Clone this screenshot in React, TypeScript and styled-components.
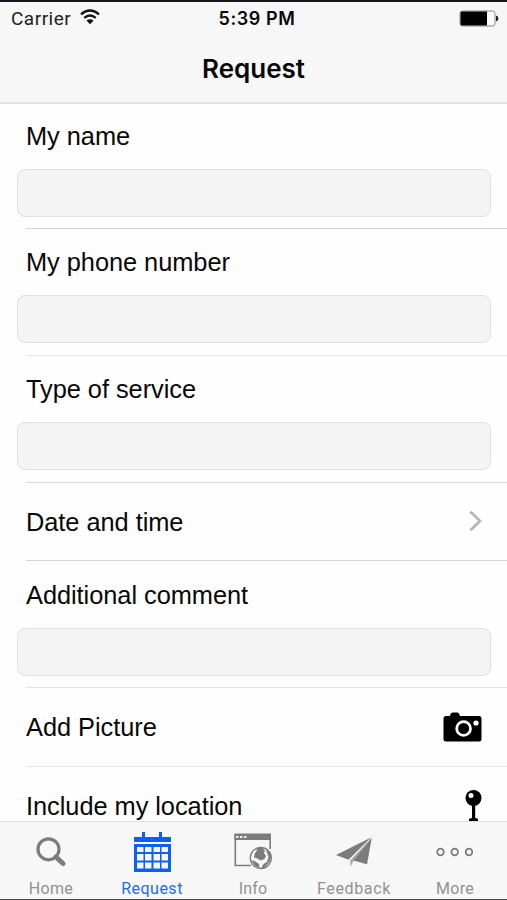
import React from 'react';
import styled, { createGlobalStyle } from 'styled-components';

const GlobalStyle = createGlobalStyle`
  *, *::before, *::after { box-sizing: border-box; }
  html, body { margin: 0; padding: 0; }
  body { background: #fff; overflow: hidden; }
`;

const Screen = styled.div`
  display: flex;
  flex-direction: column;
  width: 507px;
  height: 900px;
  overflow: hidden;
  background: #fefefe;
  color: #080808;
  border-top: 2px solid #18161a;
  border-bottom: 1px solid #444;
  font-family: 'Liberation Sans', Arial, sans-serif;
`;

const Header = styled.header`
  flex: none;
  height: 102px;
  background: #f7f7f7;
  border-bottom: 2px solid #e2e2e2;
  font-family: Inter, sans-serif;
`;

const StatusBar = styled.div`
  display: grid;
  grid-template-columns: 1fr auto 1fr;
  align-items: center;
  height: 32px;
  padding: 0 8px 0 11px;
`;

const Carrier = styled.div`
  display: flex;
  align-items: center;
  gap: 9px;
  color: #222;
  font-family: Roboto, sans-serif;
  font-size: 19px;
  letter-spacing: 0.5px;

  svg { margin-top: -2px; }
`;

const Clock = styled.div`
  font-size: 18px;
  font-weight: 600;
  letter-spacing: 0.6px;
  padding-left: 4px;
`;

const BatterySlot = styled.div`
  display: flex;
  justify-content: flex-end;
`;

const Title = styled.h1`
  margin: 0;
  height: 66px;
  line-height: 69px;
  text-align: center;
  font-size: 26px;
  font-weight: 600;
  letter-spacing: 0px;
`;

const Form = styled.main`
  flex: 1;
  min-height: 0;
  overflow: hidden;
`;

const Row = styled.div<{ $height: number; $line?: string }>`
  display: flex;
  flex-direction: column;
  height: ${(p) => p.$height}px;
  &::after {
    content: '';
    flex: none;
    height: 1px;
    margin-left: 26px;
    background: ${(p) => p.$line ?? '#e6e6e6'};
  }
`;

const FieldBody = styled.label<{ $bottom: number }>`
  flex: 1;
  display: flex;
  flex-direction: column;
  justify-content: flex-end;
  padding: 0 16px ${(p) => p.$bottom}px 17px;
`;

const Label = styled.span`
  font-size: 25.4px;
  line-height: 30px;
  letter-spacing: -0.05px;
  white-space: nowrap;
`;

const FieldLabel = styled(Label)`
  margin: 0 0 18px 9px;
`;

const Input = styled.input`
  display: block;
  width: 474px;
  height: 48px;
  padding: 0 10px;
  border: 1px solid #e0e0e0;
  border-radius: 8px;
  background: #f4f4f4;
  font: inherit;
  font-size: 22px;
  outline: none;
`;

const ActionBody = styled.div`
  flex: 1;
  display: flex;
  align-items: center;
  justify-content: space-between;
  padding: 0 25px 0 26px;
`;

const TabBar = styled.nav`
  flex: none;
  display: grid;
  grid-template-columns: repeat(5, 101px);
  height: 78px;
  background: #f6f7f6;
  border-top: 1px solid #dedede;
`;

const Tab = styled.div<{ $active?: boolean }>`
  display: flex;
  flex-direction: column;
  align-items: center;
  color: ${(p) => (p.$active ? '#0b60f8' : '#7c7c7c')};
`;

const TabIcon = styled.div`
  display: flex;
  align-items: center;
  justify-content: center;
  height: 59px;
  svg { display: block; }
`;

const TabLabel = styled.span<{ $active?: boolean; $spacing?: number }>`
  padding-left: 1px;
  font-family: Roboto, sans-serif;
  font-size: 16px;
  line-height: 16px;
  letter-spacing: ${(p) => p.$spacing ?? 0.3}px;
  color: ${(p) => (p.$active ? '#1c6bf8' : '#929292')};
`;

const WifiIcon = () => (
  <svg width="20" height="16" viewBox="0 0 20 16" fill="none" stroke="#111" strokeWidth="2.3">
    <path d="M1 5.3Q10-2.2 19 5.3" />
    <path d="M4.2 8.9Q10 4.2 15.8 8.9" />
    <path d="M10 15.2 6.5 11.6Q10 8.9 13.5 11.6Z" fill="#111" stroke="none" />
  </svg>
);

const BatteryIcon = () => (
  <svg width="40" height="17" viewBox="0 0 40 17">
    <rect x="1" y="1" width="35" height="15" rx="2.5" fill="#fbfbfb" stroke="#888" />
    <path d="M3 1.5H28V15.5H3Q1.5 15.5 1.5 14V3Q1.5 1.5 3 1.5Z" fill="#000" />
    <path d="M37 5.5Q39.4 6.2 39.4 8.5T37 11.5Z" fill="#222" />
  </svg>
);

const ChevronIcon = () => (
  <svg width="13" height="22" viewBox="0 0 13 22" fill="none" stroke="#b6b6b6" strokeWidth="2.8">
    <path d="M1.5 .8 11 10 1.5 19.2" />
  </svg>
);

const CameraIcon = () => (
  <svg width="39" height="30" viewBox="0 0 39 30">
    <path d="M3 4H7Q7.5 .5 10 .5H14Q16.5 .5 16.8 4H36Q38.5 4 38.5 6.5V27Q38.5 29.5 36 29.5H3Q.5 29.5.5 27V6.5Q.5 4 3 4Z" fill="#000" />
    <circle cx="20.6" cy="16.5" r="6.9" fill="none" stroke="#fff" strokeWidth="2.8" />
    <circle cx="33" cy="11" r="2.6" fill="#fff" />
  </svg>
);

const PinIcon = () => (
  <svg width="17" height="33" viewBox="0 0 17 33">
    <circle cx="8.5" cy="8" r="8" fill="#000" />
    <path d="M7 15H10.2V28L13 28.8V31.5H4V28.8L7 28Z" fill="#000" />
    <circle cx="6" cy="5.5" r="2.5" fill="#fff" />
  </svg>
);

const SearchIcon = () => (
  <svg width="30" height="30" viewBox="0 0 30 30" fill="none" stroke="currentColor">
    <circle cx="12.5" cy="12.3" r="10.5" strokeWidth="3.2" />
    <path d="m20 20 7 6.5" strokeWidth="5" strokeLinecap="round" />
  </svg>
);

const CalendarIcon = () => (
  <svg width="38" height="40" viewBox="0 0 38 40" fill="currentColor">
    <path d="M1 5H9V0H12V5H26V0H29V5H38V10H1Z" />
    <path
      fillRule="evenodd"
      d="M1 12H38V40H1ZM4 15V20H10.5V15ZM12 15V20H18.5V15ZM20.5 15V20H27V15ZM28.5 15V20H35V15ZM4 22V28.5H10.5V22ZM12 22V28.5H18.5V22ZM20.5 22V28.5H27V22ZM28.5 22V28.5H35V22ZM4 30.5V36.5H10.5V30.5ZM12 30.5V36.5H18.5V30.5ZM20.5 30.5V36.5H27V30.5ZM28.5 30.5V36.5H35V30.5Z"
    />
  </svg>
);

const BrowserIcon = () => (
  <svg width="38" height="37" viewBox="0 0 38 37">
    <path d="M1.3 1V32.5H17M36.2 1V16" fill="none" stroke="currentColor" strokeWidth="1.6" />
    <path d="M.5 .5H37V7H.5Z" fill="currentColor" />
    <path d="M2 3H4.5V5H2ZM6 3H8.5V5H6ZM10 3H12.5V5H10Z" fill="#eee" />
    <circle cx="26.8" cy="25" r="10.5" fill="#f6f7f6" stroke="currentColor" strokeWidth="1.3" />
    <path d="M24 14.5 28 14.8 31 17.5 30 20 32 23 30.5 26 26.5 27.5 23.5 25.5 20 24.5 20.5 21 22.5 18ZM32 17 35.5 19 37 24 35.5 29 31.5 33.5 27 35.5 29.5 31 33 29 34.5 24ZM17 27 20.5 28 25 31 25.5 35 21 33Z" fill="currentColor" />
  </svg>
);

const PlaneIcon = () => (
  <svg width="36" height="30" viewBox="0 0 36 30" fill="currentColor">
    <path d="M35 .5 0 18 12.5 22.8Z" />
    <path d="M35.8.8 17.3 23.6 31 27.2Z" />
    <path d="M34.8 1.6 14.2 23.5 14.7 30 17 24.5Z" opacity="0.65" />
  </svg>
);

const MoreIcon = () => (
  <svg width="38" height="10" viewBox="0 0 38 10" fill="none" stroke="currentColor" strokeWidth="1.7">
    <circle cx="4.5" cy="5" r="3.3" />
    <circle cx="18.7" cy="5" r="3.3" />
    <circle cx="33" cy="5" r="3.3" />
  </svg>
);

interface FieldProps {
  label: string;
  height: number;
  line?: string;
  bottom?: number;
}

const Field = ({ label, height, line, bottom = 11 }: FieldProps) => (
  <Row $height={height} $line={line}>
    <FieldBody $bottom={bottom}>
      <FieldLabel>{label}</FieldLabel>
      <Input type="text" aria-label={label} />
    </FieldBody>
  </Row>
);

interface ActionProps {
  label: string;
  height: number;
  line?: string;
  children: React.ReactNode;
}

const Action = ({ label, height, line, children }: ActionProps) => (
  <Row $height={height} $line={line}>
    <ActionBody>
      <Label>{label}</Label>
      {children}
    </ActionBody>
  </Row>
);

const tabs = [
  { label: 'Home', icon: <SearchIcon />, spacing: 0.3 },
  { label: 'Request', icon: <CalendarIcon />, active: true, spacing: 0.5 },
  { label: 'Info', icon: <BrowserIcon />, spacing: 0.2 },
  { label: 'Feedback', icon: <PlaneIcon />, spacing: 0.65 },
  { label: 'More', icon: <MoreIcon />, spacing: 0.3 },
];

export default function App() {
  return (
    <>
      <GlobalStyle />
      <Screen>
        <Header>
          <StatusBar>
            <Carrier>
              Carrier
              <WifiIcon />
            </Carrier>
            <Clock>5:39 PM</Clock>
            <BatterySlot>
              <BatteryIcon />
            </BatterySlot>
          </StatusBar>
          <Title>Request</Title>
        </Header>
        <Form>
          <Field label="My name" height={125} line="#d5d5d5" />
          <Field label="My phone number" height={127} bottom={12} />
          <Field label="Type of service" height={127} bottom={12} line="#d8d8d8" />
          <Action label="Date and time" height={78} line="#d5d5d5">
            <ChevronIcon />
          </Action>
          <Field label="Additional comment" height={127} />
          <Action label="Add Picture" height={79}>
            <CameraIcon />
          </Action>
          <Action label="Include my location" height={79}>
            <PinIcon />
          </Action>
        </Form>
        <TabBar>
          {tabs.map((tab) => (
            <Tab key={tab.label} $active={tab.active}>
              <TabIcon>{tab.icon}</TabIcon>
              <TabLabel $active={tab.active} $spacing={tab.spacing}>
                {tab.label}
              </TabLabel>
            </Tab>
          ))}
        </TabBar>
      </Screen>
    </>
  );
}
